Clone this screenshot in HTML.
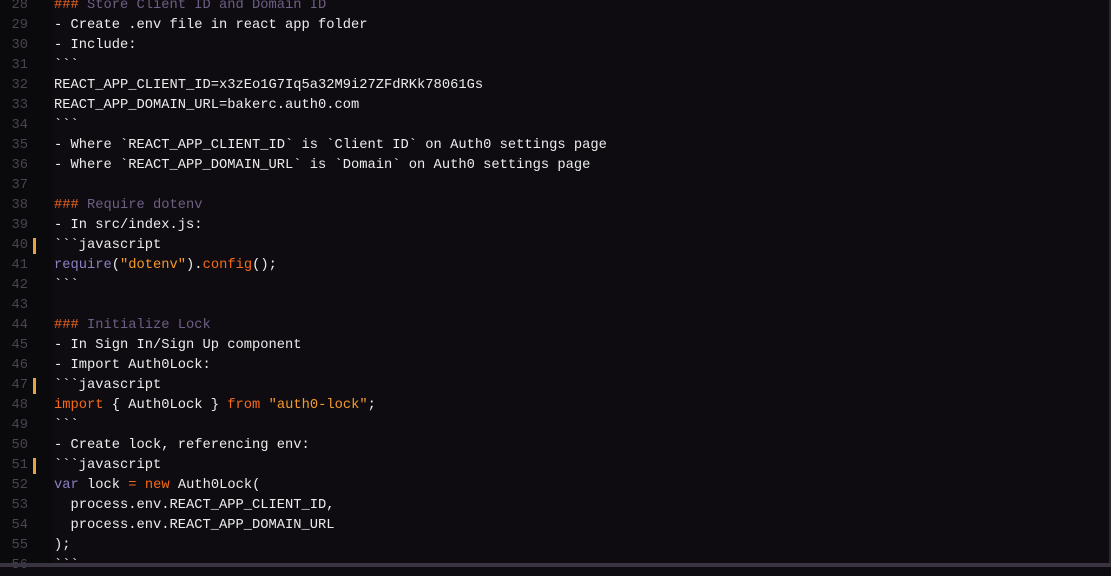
<!DOCTYPE html>
<html><head><meta charset="utf-8"><style>
html,body{margin:0;padding:0;width:1111px;height:567px;overflow:hidden;background:#0e0c10;}
.g{position:absolute;left:0;top:0;width:52px;height:564px;background:#0a090c;}
.ed{position:absolute;left:0;top:-4px;width:1111px;font-family:"Liberation Mono",monospace;font-size:13.75px;}
.l{position:relative;height:20px;line-height:20px;white-space:pre;}
.n{position:absolute;left:0;width:28px;text-align:right;color:#4a4450;}
.c{position:absolute;left:54px;color:#ececec;}
.m{position:absolute;left:33px;top:2px;width:3px;height:16px;background:#e8a33a;}
.h{color:#f2631d}.hd{color:#6e5f84}.k{color:#f66a1a}.s{color:#f59a28}.v{color:#8f7fc0}
.bot{position:absolute;left:0;top:563px;width:1111px;height:4px;background:#3a3340;}
.rt{position:absolute;left:1109px;top:0;width:2px;height:564px;background:#2a2630;}
</style></head><body>
<div class="g"></div>
<div class="ed">
<div class="l"><span class="n">28</span><span class="c"><span class="h">###</span><span class="hd"> Store Client ID and Domain ID</span></span></div>
<div class="l"><span class="n">29</span><span class="c">- Create .env file in react app folder</span></div>
<div class="l"><span class="n">30</span><span class="c">- Include:</span></div>
<div class="l"><span class="n">31</span><span class="c">&#96;&#96;&#96;</span></div>
<div class="l"><span class="n">32</span><span class="c">REACT_APP_CLIENT_ID=x3zEo1G7Iq5a32M9i27ZFdRKk78061Gs</span></div>
<div class="l"><span class="n">33</span><span class="c">REACT_APP_DOMAIN_URL=bakerc.auth0.com</span></div>
<div class="l"><span class="n">34</span><span class="c">&#96;&#96;&#96;</span></div>
<div class="l"><span class="n">35</span><span class="c">- Where &#96;REACT_APP_CLIENT_ID&#96; is &#96;Client ID&#96; on Auth0 settings page</span></div>
<div class="l"><span class="n">36</span><span class="c">- Where &#96;REACT_APP_DOMAIN_URL&#96; is &#96;Domain&#96; on Auth0 settings page</span></div>
<div class="l"><span class="n">37</span><span class="c"></span></div>
<div class="l"><span class="n">38</span><span class="c"><span class="h">###</span><span class="hd"> Require dotenv</span></span></div>
<div class="l"><span class="n">39</span><span class="c">- In src/index.js:</span></div>
<div class="l"><span class="n">40</span><span class="m"></span><span class="c">&#96;&#96;&#96;javascript</span></div>
<div class="l"><span class="n">41</span><span class="c"><span class="v">require</span>(<span class="s">"dotenv"</span>).<span class="k">config</span>();</span></div>
<div class="l"><span class="n">42</span><span class="c">&#96;&#96;&#96;</span></div>
<div class="l"><span class="n">43</span><span class="c"></span></div>
<div class="l"><span class="n">44</span><span class="c"><span class="h">###</span><span class="hd"> Initialize Lock</span></span></div>
<div class="l"><span class="n">45</span><span class="c">- In Sign In/Sign Up component</span></div>
<div class="l"><span class="n">46</span><span class="c">- Import Auth0Lock:</span></div>
<div class="l"><span class="n">47</span><span class="m"></span><span class="c">&#96;&#96;&#96;javascript</span></div>
<div class="l"><span class="n">48</span><span class="c"><span class="k">import</span> { Auth0Lock } <span class="k">from</span> <span class="s">"auth0-lock"</span>;</span></div>
<div class="l"><span class="n">49</span><span class="c">&#96;&#96;&#96;</span></div>
<div class="l"><span class="n">50</span><span class="c">- Create lock, referencing env:</span></div>
<div class="l"><span class="n">51</span><span class="m"></span><span class="c">&#96;&#96;&#96;javascript</span></div>
<div class="l"><span class="n">52</span><span class="c"><span class="v">var</span> lock <span class="k">=</span> <span class="k">new</span> Auth0Lock(</span></div>
<div class="l"><span class="n">53</span><span class="c">  process.env.REACT_APP_CLIENT_ID,</span></div>
<div class="l"><span class="n">54</span><span class="c">  process.env.REACT_APP_DOMAIN_URL</span></div>
<div class="l"><span class="n">55</span><span class="c">);</span></div>
<div class="l"><span class="n">56</span><span class="c">&#96;&#96;&#96;</span></div>
</div>
<div class="rt"></div>
<div class="bot"></div>
</body></html>
